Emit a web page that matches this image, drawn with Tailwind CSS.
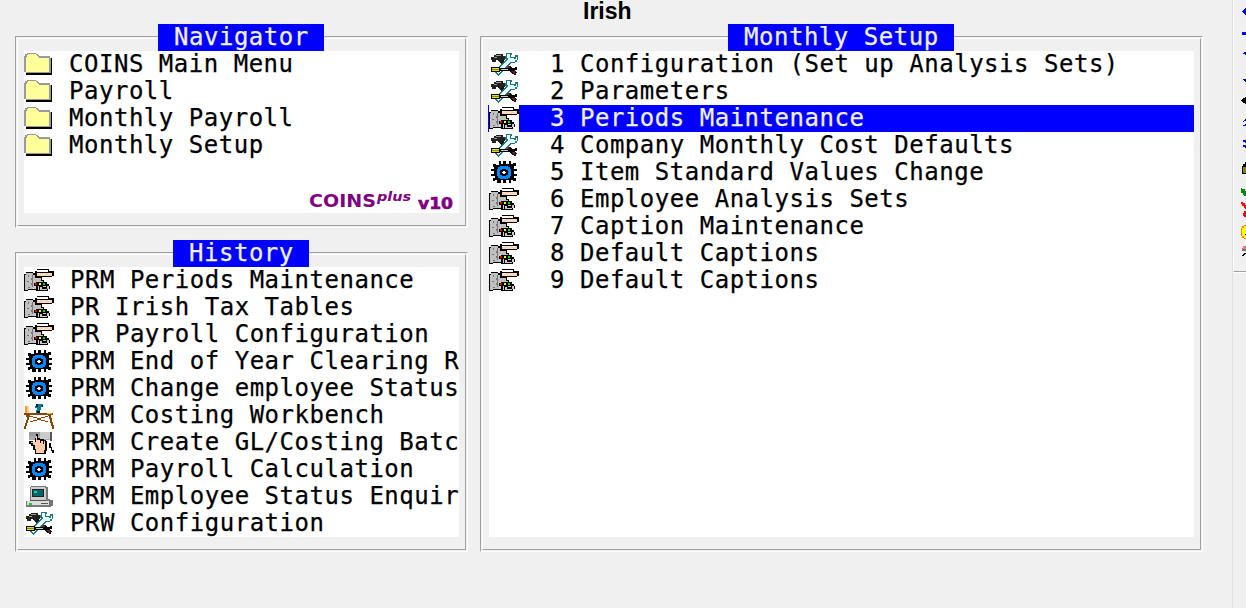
<!DOCTYPE html>
<html lang="en">
<head>
<meta charset="utf-8">
<title>COINS plus</title>
<script src="https://cdn.jsdelivr.net/npm/@tailwindcss/browser@4"></script>
</head>
<body class="h-[608px] w-[1246px] overflow-hidden bg-[#f0f0f0] text-black">
<svg class="hidden">
  <symbol id="folder" viewBox="0 0 30 27">
    <path d="M2 7H28V24H2Z" fill="#000"/><path d="M0 5h1V3h2V2h9v1h2v1h1v1h11v2h1v15H2v-1H0z" fill="#999"/><path d="M2 6h1V4h1V3h8v1h1v1h1v1h1v1h10v14H2z" fill="#ff9"/>
  </symbol>
  <symbol id="machine" viewBox="0 0 30 27">
    <path d="M2 5H9V6H11V4H13V2H25V4H30V9H28V10H18V13H20V15H23V17H25V19H26V22H24V24H12V23H4V24H0V7H2Z" fill="#000"/>
    <path d="M2 6h7v2h2v3h5v3h-4v2h-2v6H4v1H1V8h1z" fill="#c0c0c0"/>
    <path d="M4 8h1v2H4zm3 3h1v2H7zm-4 3h2v1H3zm4 2h1v2H7zm-3 4h2v1H4z" fill="#777"/>
    <path d="M8 8h1v12H8z" fill="#777"/>
    <path d="M13 3h11v2H13z" fill="#fff"/><path d="M13 6h15v2H13z" fill="#fcc"/><path d="M14 6h2v1h-2zm5 1h2v1h-2zm5-1h2v1h-2z" fill="#ff9"/><path d="M13 8h15v1H13z" fill="#fda"/>
    <path d="M12 11h5v3h2v1h-7z" fill="#c0c0c0"/><path d="M11 16h2v2h-2z" fill="#d00"/><path d="M15 16h2v2h-2z" fill="#ff0"/><path d="M19 16h2v2h-2z" fill="#0d0"/>
    <path d="M10 19h2v3h-2zm4 0h1v4h-1zm2 1h2v2h5v-3h2v3h-2v1h-7zm3-1h3v1h-3z" fill="#ccc"/>
  </symbol>
  <symbol id="gear" viewBox="0 0 30 27">
    <path d="M10 2h2v3h2V2h3v3h3V2h2v3h2V4h3v3h-2v3h3v2h-3v3h3v2h-3v2h2v3h-3v-1h-2v3h-2v-3h-3v3h-3v-3h-2v3H8v-3H6v1H4v-3h2v-2H2v-2h3v-3H2v-2h3V8H4V5h3v1h3z" fill="#000"/><path d="M11 7h8v1h2v2h1v7h-1v2h-2v1h-8v-1H9v-2H8v-7h1V8h2z" fill="#08f"/><path d="M13 10h4v1h2v5h-2v1h-4v-1h-2v-5h2z" fill="#000"/><path d="M14 12h2v3h-2zM13 13h4v1h-4z" fill="#fff"/>
  </symbol>
  <symbol id="tools" viewBox="0 0 30 27">
    <path d="M10 8L27 23" stroke="#111" stroke-width="4"/><path d="M17 14L26 22" stroke="#801828" stroke-width="2"/>
    <path d="M2 6h3V4h2V3h7v2h2v4h-3v2h-3V9H7v2H3V9H2z" fill="#222"/><path d="M7 4h5v1H7zM5 6h3v1H5z" fill="#999"/>
    <path d="M21 9L7 23" stroke="#277" stroke-width="6"/><path d="M17 2h6v2h-1v2h4V4h3v5h-1v2h-2v1h-7v-1h-2V8h-1z" fill="#277"/>
    <path d="M21 9L8 22" stroke="#e8ffff" stroke-width="3.6"/><path d="M18 3h3v4h4v1h2V6h1v3h-2v2h-5v-1h-2V7h-1z" fill="#e8ffff"/>
    <path d="M2 16h9v1h15v-1h2v3h-3v1H11v1H2z" fill="#000"/><path d="M3 17h7v3H3z" fill="#ed0"/><path d="M3 18h7v1H3z" fill="#880"/><path d="M12 18h7v1h-7z" fill="#bcc"/>
  </symbol>
  <symbol id="bench" viewBox="0 0 30 27">
    <path d="M1 4h2v8H1z" fill="#f93"/><path d="M3 4h2v8H3z" fill="#fc8"/><path d="M12 3h2V2h5v3h-2v3h-1v3h2v1H9v-1h3V8h1V6h-2V4h1z" fill="#008080"/><path d="M12 2h2v3h-2zM13 9h3v3h-3zM18 3h1v2h-1z" fill="#007"/>
    <path d="M0 11h29v2H0zm2 1h4v3H5v3H4v3H3v3H2v3H0v-3h1v-3h1v-3h1v-3H2zm22 0h3v4h1v4h1v3h1v4h-2v-3h-1v-3h-1v-4h-1v-3h-1zM6 14h3v1h4v1h4v-1h4v-1h3v1h-3v1h-4v1h-4v-1H9v-1H6zm0 5h3v-1h4v-1h4v1h4v1h3v1h-3v-1h-4v-1h-4v1H9v1H6z" fill="#840"/><path d="M23 11h5v1h-5z" fill="#cc3"/>
  </symbol>
  <symbol id="press" viewBox="0 0 30 27">
    <path d="M5 3h23v8H5z" fill="#aaa"/><path d="M5 3h12v4H5z" fill="#999"/><path d="M16 3h10v7H16z" fill="#ccc"/><path d="M26 3h2v9h-2z" fill="#555"/>
    <path d="M12 5h2v4h2v1h4v1h2v1h1v10h-1v3h-11v-4H9v-4H7v-2H5v-3h4v1h2z" fill="#000"/><path d="M12 7h1v4h3v1h5v9h-1v3h-8v-4h-1v-4H9v-2H7v-1h5z" fill="#fca"/><path d="M16 11h1v3h-1zm3 1h1v3h-1zM25 14h2v4h1v3h2v3h-2v-2h-1v-3h-2z" fill="#000"/>
  </symbol>
  <symbol id="computer" viewBox="0 0 30 27">
    <path d="M6 4h1V3h15v1h2v12h2v1h3v6h-2v1H2v-6h4z" fill="#777"/><path d="M7 4h14v1h1v12H7z" fill="#ccc"/><path d="M8 6h12v8H8z" fill="#222"/><path d="M9 7h10v6H9z" fill="#066"/><path d="M10 8h3v2h-3z" fill="#0cc"/><path d="M3 18h22v4H3z" fill="#ddd"/><path d="M5 20h3v2H5z" fill="#0d0"/><path d="M17 20h7v1h-7zM6 17h16v1H6z" fill="#555"/>
  </symbol>
</svg>
<div class="flex h-full">
  <main class="flex w-[1232px] shrink-0 flex-col">
    <h1 class="h-6 pl-[583px] font-['Liberation_Sans',sans-serif] text-[23px] leading-[23px] font-bold">Irish</h1>
    <div class="flex gap-3 pl-[15px] font-['DejaVu_Sans_Mono',monospace] text-[24px] leading-[27px] tracking-[0.52px] whitespace-nowrap [-webkit-text-stroke:0.25px_currentColor]">
      <div class="flex w-[453px] flex-col gap-3">
        <section class="grid h-[204px] grid-cols-1 grid-rows-1">
          <div class="col-start-1 row-start-1 mt-3 border border-t-[#a0a0a0] border-r-white border-b-white border-l-[#a0a0a0] p-px"><div class="h-full border border-t-white border-r-[#a0a0a0] border-b-[#a0a0a0] border-l-white"></div></div>
          <div class="col-start-1 row-start-1 flex flex-col">
            <h2 class="ml-[143px] h-[27px] w-[166px] overflow-hidden bg-[#00f] pl-4 text-[#f0f0f0]">Navigator</h2>
            <div class="ml-[9px] h-[162px] w-[435px] overflow-hidden bg-white">
              <div class="flex h-[27px]"><svg class="mr-[15px] h-[27px] w-[30px] shrink-0" shape-rendering="crispEdges"><use href="#folder"/></svg>COINS Main Menu</div>
              <div class="flex h-[27px]"><svg class="mr-[15px] h-[27px] w-[30px] shrink-0" shape-rendering="crispEdges"><use href="#folder"/></svg>Payroll</div>
              <div class="flex h-[27px]"><svg class="mr-[15px] h-[27px] w-[30px] shrink-0" shape-rendering="crispEdges"><use href="#folder"/></svg>Monthly Payroll</div>
              <div class="flex h-[27px]"><svg class="mr-[15px] h-[27px] w-[30px] shrink-0" shape-rendering="crispEdges"><use href="#folder"/></svg>Monthly Setup</div>
              <svg class="mt-7 ml-[280px] h-[26px] w-[155px]" fill="#800080" font-family="DejaVu Sans, sans-serif" font-weight="bold" letter-spacing="0">
                <text x="5" y="20" font-size="17" textLength="67" lengthAdjust="spacingAndGlyphs">COINS</text>
                <text x="73" y="14" font-size="12" font-style="italic" textLength="34" lengthAdjust="spacingAndGlyphs">plus</text>
                <text x="114" y="22" font-size="15" textLength="35" lengthAdjust="spacingAndGlyphs" stroke="#800080" stroke-width="0.6">v10</text>
              </svg>
            </div>
          </div>
        </section>
        <section class="grid h-[312px] grid-cols-1 grid-rows-1">
          <div class="col-start-1 row-start-1 mt-3 border border-t-[#a0a0a0] border-r-white border-b-white border-l-[#a0a0a0] p-px"><div class="h-full border border-t-white border-r-[#a0a0a0] border-b-[#a0a0a0] border-l-white"></div></div>
          <div class="col-start-1 row-start-1 flex flex-col">
            <h2 class="ml-[158px] h-[27px] w-[136px] overflow-hidden bg-[#00f] pl-4 text-[#f0f0f0]">History</h2>
            <div class="ml-[9px] h-[270px] w-[435px] bg-white">
              <div class="flex h-[27px]"><svg class="mr-4 h-[27px] w-[30px] shrink-0" shape-rendering="crispEdges"><use href="#machine"/></svg>PRM Periods Maintenance</div>
              <div class="flex h-[27px]"><svg class="mr-4 h-[27px] w-[30px] shrink-0" shape-rendering="crispEdges"><use href="#machine"/></svg>PR Irish Tax Tables</div>
              <div class="flex h-[27px]"><svg class="mr-4 h-[27px] w-[30px] shrink-0" shape-rendering="crispEdges"><use href="#machine"/></svg>PR Payroll Configuration</div>
              <div class="flex h-[27px]"><svg class="mr-4 h-[27px] w-[30px] shrink-0" shape-rendering="crispEdges"><use href="#gear"/></svg>PRM End of Year Clearing R</div>
              <div class="flex h-[27px]"><svg class="mr-4 h-[27px] w-[30px] shrink-0" shape-rendering="crispEdges"><use href="#gear"/></svg>PRM Change employee Status</div>
              <div class="flex h-[27px]"><svg class="mr-4 h-[27px] w-[30px] shrink-0" shape-rendering="crispEdges"><use href="#bench"/></svg>PRM Costing Workbench</div>
              <div class="flex h-[27px]"><svg class="mr-4 h-[27px] w-[30px] shrink-0" shape-rendering="crispEdges"><use href="#press"/></svg>PRM Create GL/Costing Batc</div>
              <div class="flex h-[27px]"><svg class="mr-4 h-[27px] w-[30px] shrink-0" shape-rendering="crispEdges"><use href="#gear"/></svg>PRM Payroll Calculation</div>
              <div class="flex h-[27px]"><svg class="mr-4 h-[27px] w-[30px] shrink-0" shape-rendering="crispEdges"><use href="#computer"/></svg>PRM Employee Status Enquir</div>
              <div class="flex h-[27px]"><svg class="mr-4 h-[27px] w-[30px] shrink-0" shape-rendering="crispEdges"><use href="#tools"/></svg>PRW Configuration</div>
            </div>
          </div>
        </section>
      </div>
      <section class="grid h-[528px] w-[723px] grid-cols-1 grid-rows-1">
        <div class="col-start-1 row-start-1 mt-3 border border-t-[#a0a0a0] border-r-white border-b-white border-l-[#a0a0a0] p-px"><div class="h-full border border-t-white border-r-[#a0a0a0] border-b-[#a0a0a0] border-l-white"></div></div>
        <div class="col-start-1 row-start-1 flex flex-col">
          <h2 class="ml-[248px] h-[27px] w-[226px] overflow-hidden bg-[#00f] pl-4 text-[#f0f0f0]">Monthly Setup</h2>
          <div class="ml-[9px] h-[486px] w-[705px] bg-white">
            <div class="flex h-[27px]"><svg class="mr-[31px] h-[27px] w-[30px] shrink-0" shape-rendering="crispEdges"><use href="#tools"/></svg>1 Configuration (Set up Analysis Sets)</div>
            <div class="flex h-[27px]"><svg class="mr-[31px] h-[27px] w-[30px] shrink-0" shape-rendering="crispEdges"><use href="#tools"/></svg>2 Parameters</div>
            <div class="-ml-px flex h-[27px] bg-[#00f] pl-px text-[#f0f0f0]"><svg class="mr-[31px] h-[27px] w-[30px] shrink-0 bg-white" shape-rendering="crispEdges"><use href="#machine"/></svg>3 Periods Maintenance</div>
            <div class="flex h-[27px]"><svg class="mr-[31px] h-[27px] w-[30px] shrink-0" shape-rendering="crispEdges"><use href="#tools"/></svg>4 Company Monthly Cost Defaults</div>
            <div class="flex h-[27px]"><svg class="mr-[31px] h-[27px] w-[30px] shrink-0" shape-rendering="crispEdges"><use href="#gear"/></svg>5 Item Standard Values Change</div>
            <div class="flex h-[27px]"><svg class="mr-[31px] h-[27px] w-[30px] shrink-0" shape-rendering="crispEdges"><use href="#machine"/></svg>6 Employee Analysis Sets</div>
            <div class="flex h-[27px]"><svg class="mr-[31px] h-[27px] w-[30px] shrink-0" shape-rendering="crispEdges"><use href="#machine"/></svg>7 Caption Maintenance</div>
            <div class="flex h-[27px]"><svg class="mr-[31px] h-[27px] w-[30px] shrink-0" shape-rendering="crispEdges"><use href="#machine"/></svg>8 Default Captions</div>
            <div class="flex h-[27px]"><svg class="mr-[31px] h-[27px] w-[30px] shrink-0" shape-rendering="crispEdges"><use href="#machine"/></svg>9 Default Captions</div>
          </div>
        </div>
      </section>
    </div>
  </main>
  <aside class="w-[14px] border-l border-[#e0e0e0]">
    <div class="h-[272px] w-[13px] border-b border-l border-b-[#a0a0a0] border-l-white">
      <svg class="h-[271px] w-3" viewBox="1234 0 12 271" shape-rendering="crispEdges">
        <path d="M1242 11h1v-1h1V9h1V8h1v7h-1v-1h-1v-1h-1v-1h-1zm0 21h4v3h-4zm1 22v-1h1v-1h2v3h-1v-1zm0 25h3v3h-1v-1h-1v-1h-1zm1 41h1v-1h1v2h-2v1h-1v-1zm0 5h1v-1h1v2h-3v-1zm-1 15h3v3h-1v-1h-2zm0 5h3v3h-1v-1h-2z" fill="#00f"/>
        <path d="M1241 100h1v-1h1v-1h2v-1h1v7h-1v-1h-2v-1h-1v-1h-1zM1242 166h1v-2h2v-2h1v12h-4z" fill="#000"/><path d="M1243 167h3v6h-3z" fill="#880"/>
        <path d="M1241 188h1v1h3v2h1v5h-2v-1h-1v-2h-2z" fill="#080"/><path d="M1241 202h2v1h2v2h1v4h-1v-1h-1v-2h-2v-2h-1zm2 12v-1h1v-2h2v6h-2v-1h-1z" fill="#f00"/>
        <path d="M1241 228h1v-2h2v-1h2v14h-2v-1h-2v-2h-1z" fill="#f80"/><path d="M1242 228h2v-2h2v12h-2v-2h-2z" fill="#ff0"/><path d="M1245 234h1v1h-1z" fill="#000"/>
        <path d="M1243 246h3v3h-4v-1h1z" fill="#f76"/><path d="M1242 249h4v2h-4z" fill="#777"/><path d="M1242 255h1v-1h1v-1h2v1h-1v1h-1v1h-2z" fill="#000"/>
      </svg>
    </div>
    <div class="h-px border-t border-l border-white"></div>
  </aside>
</div>
</body>
</html>
